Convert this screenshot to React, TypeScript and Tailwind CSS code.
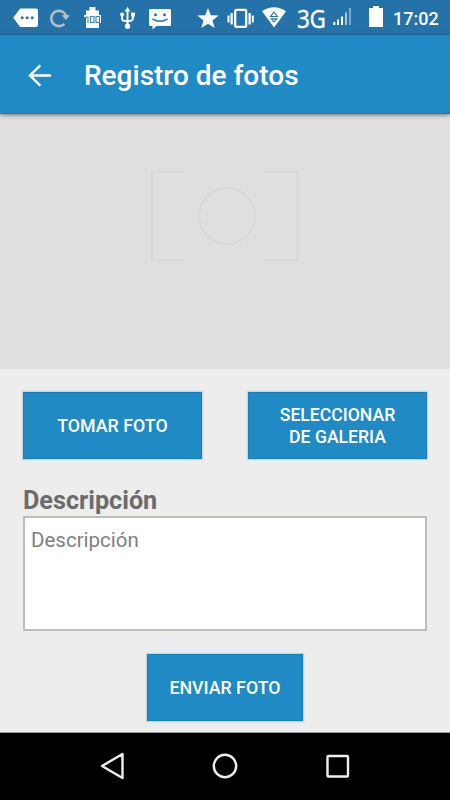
import { useState } from "react";

function StatusBar() {
  return (
    <div className="flex h-[35px] items-start bg-[#2572a8] text-white">
      {/* notifications */}
      <svg className="ml-[13px] mt-2" width="25" height="20" viewBox="0 0 25 20">
        <path d="M7.2 0.5H23a2 2 0 0 1 2 2v14.6a2 2 0 0 1-2 2H7.2L.2 9.8z" fill="#fff" />
        <g fill="#2572a8">
          <circle cx="9.2" cy="9.8" r="1.5" />
          <circle cx="14.2" cy="9.8" r="1.5" />
          <circle cx="19.2" cy="9.8" r="1.5" />
        </g>
      </svg>
      <svg className="ml-3 mt-2" width="20" height="20" viewBox="0 0 20 20">
        <path d="M14.4 15.9A7.7 7.7 0 1 1 16.3 8" fill="none" stroke="#b8bec3" strokeWidth="2.5" />
        <path d="M11.5 7.200h8.300l-3.800 4.800z" fill="#b8bec3" />
      </svg>
      <svg className="ml-[13px] mt-[7px]" width="20" height="22" viewBox="0 0 20 22">
        <path d="M6.500 0h6v3.500h3.500V21H3V3.500h3.500z" fill="#fff" />
        <path d="M1 8h17v8H3V10H1z" fill="#fff" />
        <g fill="none" stroke="#3f84b5" strokeWidth="1.100">
          <path d="M3 10h2v6" />
          <rect x="7.500" y="9.500" width="3.500" height="6" />
          <rect x="13" y="9.500" width="3.500" height="6" />
        </g>
      </svg>
      <svg className="ml-[17px] mt-[7px]" width="16" height="23" viewBox="0 0 16 23">
        <g fill="none" stroke="#fff" strokeWidth="1.900">
          <path d="M7.500 3v16" />
          <path d="M2.100 8v3.500q0 2 2 2.300l3.500.8" />
          <path d="M13 8v2.500q0 2.800-2 3.100l-3.700.9" />
        </g>
        <g fill="#fff">
          <path d="M7.500 0l3 4.400h-6z" />
          <circle cx="2.100" cy="7.600" r="2" />
          <path d="M11 5.600h4v4h-4z" />
          <circle cx="7.500" cy="19.300" r="2.700" />
        </g>
      </svg>
      <svg className="ml-[13px] mt-[9px]" width="22" height="21" viewBox="0 0 22 21">
        <path d="M1.500 0h19A1.500 1.500 0 0 1 22 1.500v14a1.500 1.500 0 0 1-1.500 1.500H7.500l-4 3.500V17h-2A1.500 1.500 0 0 1 0 15.500v-14A1.500 1.500 0 0 1 1.500 0z" fill="#fff" />
        <circle cx="6.500" cy="5.800" r="1.500" fill="#2572a8" />
        <circle cx="15.500" cy="5.800" r="1.500" fill="#2572a8" />
        <path d="M3.500 9.800q7.500 5 15 0" fill="none" stroke="#2572a8" strokeWidth="1.500" />
      </svg>

      {/* system */}
      <svg className="ml-[26px] mt-2" width="22" height="20" viewBox="0 0 22 20">
        <path d="M11 0l2.800 7.200 7.900.4-6.200 4.900 2.200 7.500L11 15.800 4.300 20l2.200-7.500L.3 7.600l7.900-.4z" fill="#fff" />
      </svg>
      <svg className="ml-2 mt-2" width="28" height="21" viewBox="0 0 28 21">
        <rect x="8.200" y="1.900" width="11" height="17" rx="1" fill="none" stroke="#fff" strokeWidth="2.200" />
        <g fill="#fff">
          <path d="M.5 7.500h2v7h-2zM3.500 5h2.300v11.500H3.500zM21.500 5h2.300v11.500h-2.300zM24.800 7.500h2v7h-2z" />
        </g>
      </svg>
      <svg className="ml-[7px] mt-[7px]" width="24" height="21" viewBox="0 0 24 21">
        <path d="M0 4.300Q12-3.600 24 4.300L12.100 20.500z" fill="#fff" />
        <path d="M12 5l3.500 4.500h-7z" fill="none" stroke="#2572a8" strokeWidth="1.100" />
        <path d="M8 11.300h8l-4 4.500z" fill="#2572a8" />
        <path d="M10.500 12.500h3L12 14.200z" fill="#fff" />
      </svg>
      <span className="ml-[11px] w-[29px] whitespace-nowrap font-['Noto_Sans','Open_Sans',sans-serif] text-[25px] leading-[36px]">
        <span className="inline-block origin-left scale-x-90 tracking-[-0.5px] [-webkit-text-stroke:0.3px_white]">3G</span>
      </span>
      <svg className="ml-[7px] mt-[7px]" width="19" height="19" viewBox="0 0 19 19">
        <g fill="#fff">
          <path d="M.3 15h2v3h-2zM4 12.500h2V18H4zM8 9.500h2V18H8z" />
          <path d="M12 5.500h2V18h-2z" fillOpacity=".6" />
          <path d="M16 1h2v17h-2z" fillOpacity=".4" />
        </g>
      </svg>
      <svg className="ml-[17px] mt-[6px]" width="14" height="21" viewBox="0 0 14 21">
        <path d="M4 0h6v2h4v19H0V2h4z" fill="#fff" />
      </svg>
      <span className="ml-[10px] whitespace-nowrap text-[18px] font-medium leading-[37px]">17:02</span>
    </div>
  );
}

function AppBar() {
  return (
    <header className="relative flex h-[79px] items-center border-b border-[#1580bb] bg-[#1f8ac4] pt-[3px] text-white shadow-[0_1px_4px_rgba(0,0,0,0.5)]">
      <button type="button" aria-label="Atrás" className="ml-7">
        <svg width="24" height="24" viewBox="0 0 24 24" fill="none" stroke="#fff" strokeWidth="2.400">
          <path d="M23 11.500H2M12.300 1.300L2 11.500l10.300 10.200" />
        </svg>
      </button>
      <h1 className="ml-8 whitespace-nowrap text-[28px] font-medium">Registro de fotos</h1>
    </header>
  );
}

function PhotoPreview() {
  return (
    <div className="flex h-[255px] justify-center bg-[#dfdfdf] pt-14">
      <svg width="148" height="92" viewBox="0 0 148 92" fill="none" stroke="#d8d8d8" strokeWidth="1.500">
        <path d="M34 1.500H1v89h33M113 1.500h33.500v89H113" />
        <circle cx="76" cy="46" r="28" strokeWidth="2" />
      </svg>
    </div>
  );
}

const buttonClass =
  "flex h-[67px] items-center justify-center border border-[#1282bf] bg-[#1f8ac4] text-center font-medium leading-[22px] text-white shadow-[0_0_1px_1px_rgba(120,130,160,0.25)]";

function NavBar() {
  return (
    <nav className="flex h-[68px] items-center justify-between border-t border-[#999] bg-black px-[100px] pb-px">
      <svg width="25" height="28" viewBox="0 0 25 28" fill="none" stroke="#eee" strokeWidth="2.400" strokeLinejoin="round">
        <path d="M22.500 2v24L2 14z" />
      </svg>
      <svg width="26" height="26" viewBox="0 0 26 26" fill="none" stroke="#eee" strokeWidth="2.400">
        <circle cx="13" cy="13" r="11.200" />
      </svg>
      <svg width="25" height="24" viewBox="0 0 25 24" fill="none" stroke="#eee" strokeWidth="2.400">
        <rect x="2.500" y="2" width="20.500" height="20.500" rx="1" />
      </svg>
    </nav>
  );
}

export default function App() {
  const [description, setDescription] = useState("");

  return (
    <div className="flex h-[800px] w-[450px] flex-col overflow-hidden bg-[#ededed] font-['Roboto',sans-serif]">
      <StatusBar />
      <AppBar />
      <PhotoPreview />

      <main className="flex flex-1 flex-col px-[23px] pt-[23px]">
        <div className="flex justify-between">
          <button type="button" className={`${buttonClass} w-[179px] text-[17.8px]`}>
            TOMAR FOTO
          </button>
          <button type="button" className={`${buttonClass} w-[179px] text-[17.6px]`}>
            SELECCIONAR
            <br />
            DE GALERIA
          </button>
        </div>

        <label htmlFor="description" className="mt-[26px] h-[31px] text-[25.2px] font-bold leading-[31px] text-[#6b6b6b]">
          Descripción
        </label>
        <textarea
          id="description"
          value={description}
          onChange={(e) => setDescription(e.target.value)}
          placeholder="Descripción"
          className="h-[115px] resize-none border-2 border-[#bebfb2] bg-white px-1.5 py-2 text-[20.5px] leading-7 text-[#333] outline-none placeholder:text-[#808080]"
        />

        <button type="button" className={`${buttonClass} mt-[23px] w-[156px] self-center text-[17.8px]`}>
          ENVIAR FOTO
        </button>
      </main>

      <NavBar />
    </div>
  );
}
